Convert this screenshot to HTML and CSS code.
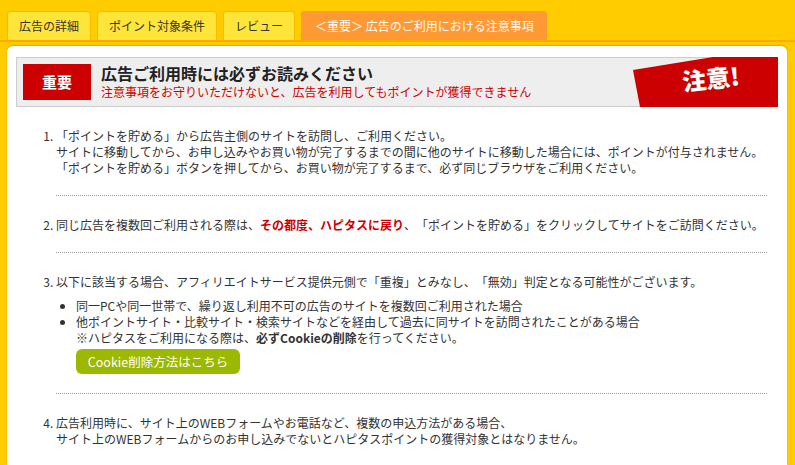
FILE: index.html
```html
<!DOCTYPE html>
<html lang="ja">
<head>
  <meta charset="UTF-8" />
  <title>広告のご利用における注意事項</title>
  <meta name="viewport" content="width=device-width, initial-scale=1" />
  <link rel="stylesheet" href="styles.css">
</head>
<body>
  <div id="tabs">
    <a class="tab">広告の詳細</a>
    <a class="tab">ポイント対象条件</a>
    <a class="tab">レビュー</a>
    <a class="tab active">＜重要＞ 広告のご利用における注意事項</a>
  </div>
  <div id="panel">
    <div class="alert">
      <span class="alert-label">重要</span>
      <div class="alert-text">
        <h2>広告ご利用時には必ずお読みください</h2>
        <p>注意事項をお守りいただけないと、広告を利用してもポイントが獲得できません</p>
      </div>
      <div class="alert-flag"><span>注意!</span></div>
    </div>
    <ol class="notes">
      <li>「ポイントを貯める」から広告主側のサイトを訪問し、ご利用ください。<br>サイトに移動してから、お申し込みやお買い物が完了するまでの間に他のサイトに移動した場合には、ポイントが付与されません。<br>「ポイントを貯める」ボタンを押してから、お買い物が完了するまで、必ず同じブラウザをご利用ください。</li>
      <li>同じ広告を複数回ご利用される際は、<strong class="red">その都度、ハピタスに戻り</strong>、「ポイントを貯める」をクリックしてサイトをご訪問ください。</li>
      <li>以下に該当する場合、アフィリエイトサービス提供元側で「重複」とみなし、「無効」判定となる可能性がございます。
        <ul>
          <li>同一PCや同一世帯で、繰り返し利用不可の広告のサイトを複数回ご利用された場合</li>
          <li>他ポイントサイト・比較サイト・検索サイトなどを経由して過去に同サイトを訪問されたことがある場合<br>※ハピタスをご利用になる際は、<strong>必ずCookieの削除</strong>を行ってください。<br><a class="cookie-btn">Cookie削除方法はこちら</a></li>
        </ul>
      </li>
      <li>広告利用時に、サイト上のWEBフォームやお電話など、複数の申込方法がある場合、<br>サイト上のWEBフォームからのお申し込みでないとハピタスポイントの獲得対象とはなりません。</li>
    </ol>
  </div>
</body>
</html>
```

FILE: styles.css
```css
body{
  margin:0;background:#ffcc00;
  font-family:"Noto Sans CJK JP","Noto Sans",sans-serif;
  font-size:12px;line-height:16px;color:#333;
  text-spacing-trim:space-all;
  overflow:hidden;height:100vh;
}
#tabs{
  display:flex;gap:6px;padding:11px 0 0 7px;
  border-bottom:2px solid #ffaa00;
}
.tab{
  display:block;height:28px;line-height:28px;padding:0 11px;
  background:#ffe53a;border:1px solid #f7bb00;border-bottom:none;
  border-radius:4px 4px 0 0;color:#333;
}
.tab.active{background:#ff9933;border-color:#ff9933;color:#fff;padding:0 12px 0 13px;}
#panel{
  box-sizing:border-box;height:calc(100vh - 46px);overflow:hidden;
  margin:4px 8px 0 7px;padding:11px 9px 0;
  background:#fff;border-radius:6px 6px 0 0;
  box-shadow:0 -1px 2px #e0a800;
}
.alert{
  position:relative;display:flex;align-items:center;gap:10px;
  height:48px;padding:0 6px;
  background:#eee;border:1px solid #ccc;
}
.alert-label{
  width:68px;height:36px;line-height:36px;text-align:center;
  background:#cc0000;color:#fff;font-weight:bold;font-size:15px;
}
.alert-text h2{margin:0;font-size:16px;line-height:20px;font-weight:bold;color:#222;}
.alert-text p{margin:0;font-size:12px;line-height:18px;color:#cc0000;}
.alert-flag{
  position:absolute;top:-1px;right:-1px;bottom:-1px;width:145px;
  background:#cc0000;
  clip-path:polygon(0 13px,80px 0,100% 0,100% 100%,7px 100%);
  display:flex;align-items:center;justify-content:center;
}
.alert-flag span{
  margin:0 0 8px 10px;color:#fff;font-size:24px;font-weight:900;line-height:1;
  transform:rotate(-6deg);
}
.notes{margin:0 11px 0 0;padding:0 0 0 40px;}
.notes > li{padding:21px 0 19px;border-bottom:1px dotted #999;}
.notes > li:last-child{border-bottom:none;}
.notes ul{margin:8px 0 0;padding-left:20px;list-style:disc;}
.red{color:#cc0000;}
.cookie-btn{
  display:inline-block;margin-top:3px;width:164px;text-align:center;
  height:25px;line-height:25px;border-radius:6px;
  background:#9cb800;color:#fff;font-size:12.5px;
}
```
